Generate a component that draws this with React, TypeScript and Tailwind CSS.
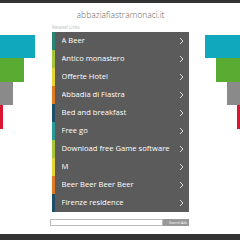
const links = [
  { label: 'A Beer', color: 'bg-[#2a8577]' },
  { label: 'Antico monastero', color: 'bg-[#a8c43a]' },
  { label: 'Offerte Hotel', color: 'bg-[#e4d43a]' },
  { label: 'Abbadia di Fiastra', color: 'bg-[#e07a20]' },
  { label: 'Bed and breakfast', color: 'bg-[#1d4f6a]' },
  { label: 'Free go', color: 'bg-[#2a9a98]' },
  { label: 'Download free Game software', color: 'bg-[#a8c43a]' },
  { label: 'M', color: 'bg-[#e4d43a]' },
  { label: 'Beer Beer Beer Beer', color: 'bg-[#e07a20]' },
  { label: 'Firenze residence', color: 'bg-[#1d4f6a]' },
];

function Chevron() {
  return (
    <svg width="5" height="8" viewBox="0 0 5 8" className="shrink-0">
      <polyline points="1,1 4,4 1,7" fill="none" stroke="#e8e8e8" strokeWidth="0.9" />
    </svg>
  );
}

export default function App() {
  return (
    <div className="flex h-[240px] w-[240px] flex-col overflow-hidden bg-white font-['Open_Sans',sans-serif]">
      <div className="h-[3px] bg-[#333]" />

      <div className="flex flex-1">
        {/* left deco */}
        <div className="flex w-[52px] flex-col items-start pt-[32px]">
          <div className="h-[23px] w-[35px] bg-[#0fa8bd]" />
          <div className="h-[24px] w-[24px] bg-[#5aab32]" />
          <div className="h-[23px] w-[13px] bg-[#8a8a8a]" />
          <div className="h-[24px] w-[3px] bg-[#d9162f]" />
        </div>

        {/* center */}
        <div className="flex w-[137px] flex-col">
          <div className="mt-[6px] text-center text-[8.5px] leading-[12px] font-light text-[#666]">
            abbaziafiastramonaci.it
          </div>
          <div className="mt-[3px] text-[4.5px] leading-[6px] text-[#bbb]">Related Links</div>
          <div className="mt-[2px] flex flex-col bg-[#5b5b5b]">
            {links.map((l) => (
              <div key={l.label} className="flex h-[18px] items-center">
                <div className={`h-full w-[2.5px] ${l.color}`} />
                <span className="ml-[7px] flex-1 truncate text-[7.6px] text-white">{l.label}</span>
                <div className="mr-[5px]">
                  <Chevron />
                </div>
              </div>
            ))}
          </div>
          <div className="mt-[7px] flex h-[7px] -ml-[2px]">
            <div className="w-[113px] border border-[#bbb] bg-white" />
            <div className="flex flex-1 items-center justify-end bg-[#999] pr-[2px] text-[3.5px] leading-none text-white">
              Search Ads
            </div>
          </div>
        </div>

        {/* right deco */}
        <div className="flex flex-1 flex-col items-end pt-[32px]">
          <div className="h-[23px] w-[35px] bg-[#0fa8bd]" />
          <div className="h-[24px] w-[24px] bg-[#5aab32]" />
          <div className="h-[23px] w-[13px] bg-[#8a8a8a]" />
          <div className="h-[24px] w-[3px] bg-[#d9162f]" />
        </div>
      </div>

      <div className="h-[6px] bg-[#333]" />
    </div>
  );
}
